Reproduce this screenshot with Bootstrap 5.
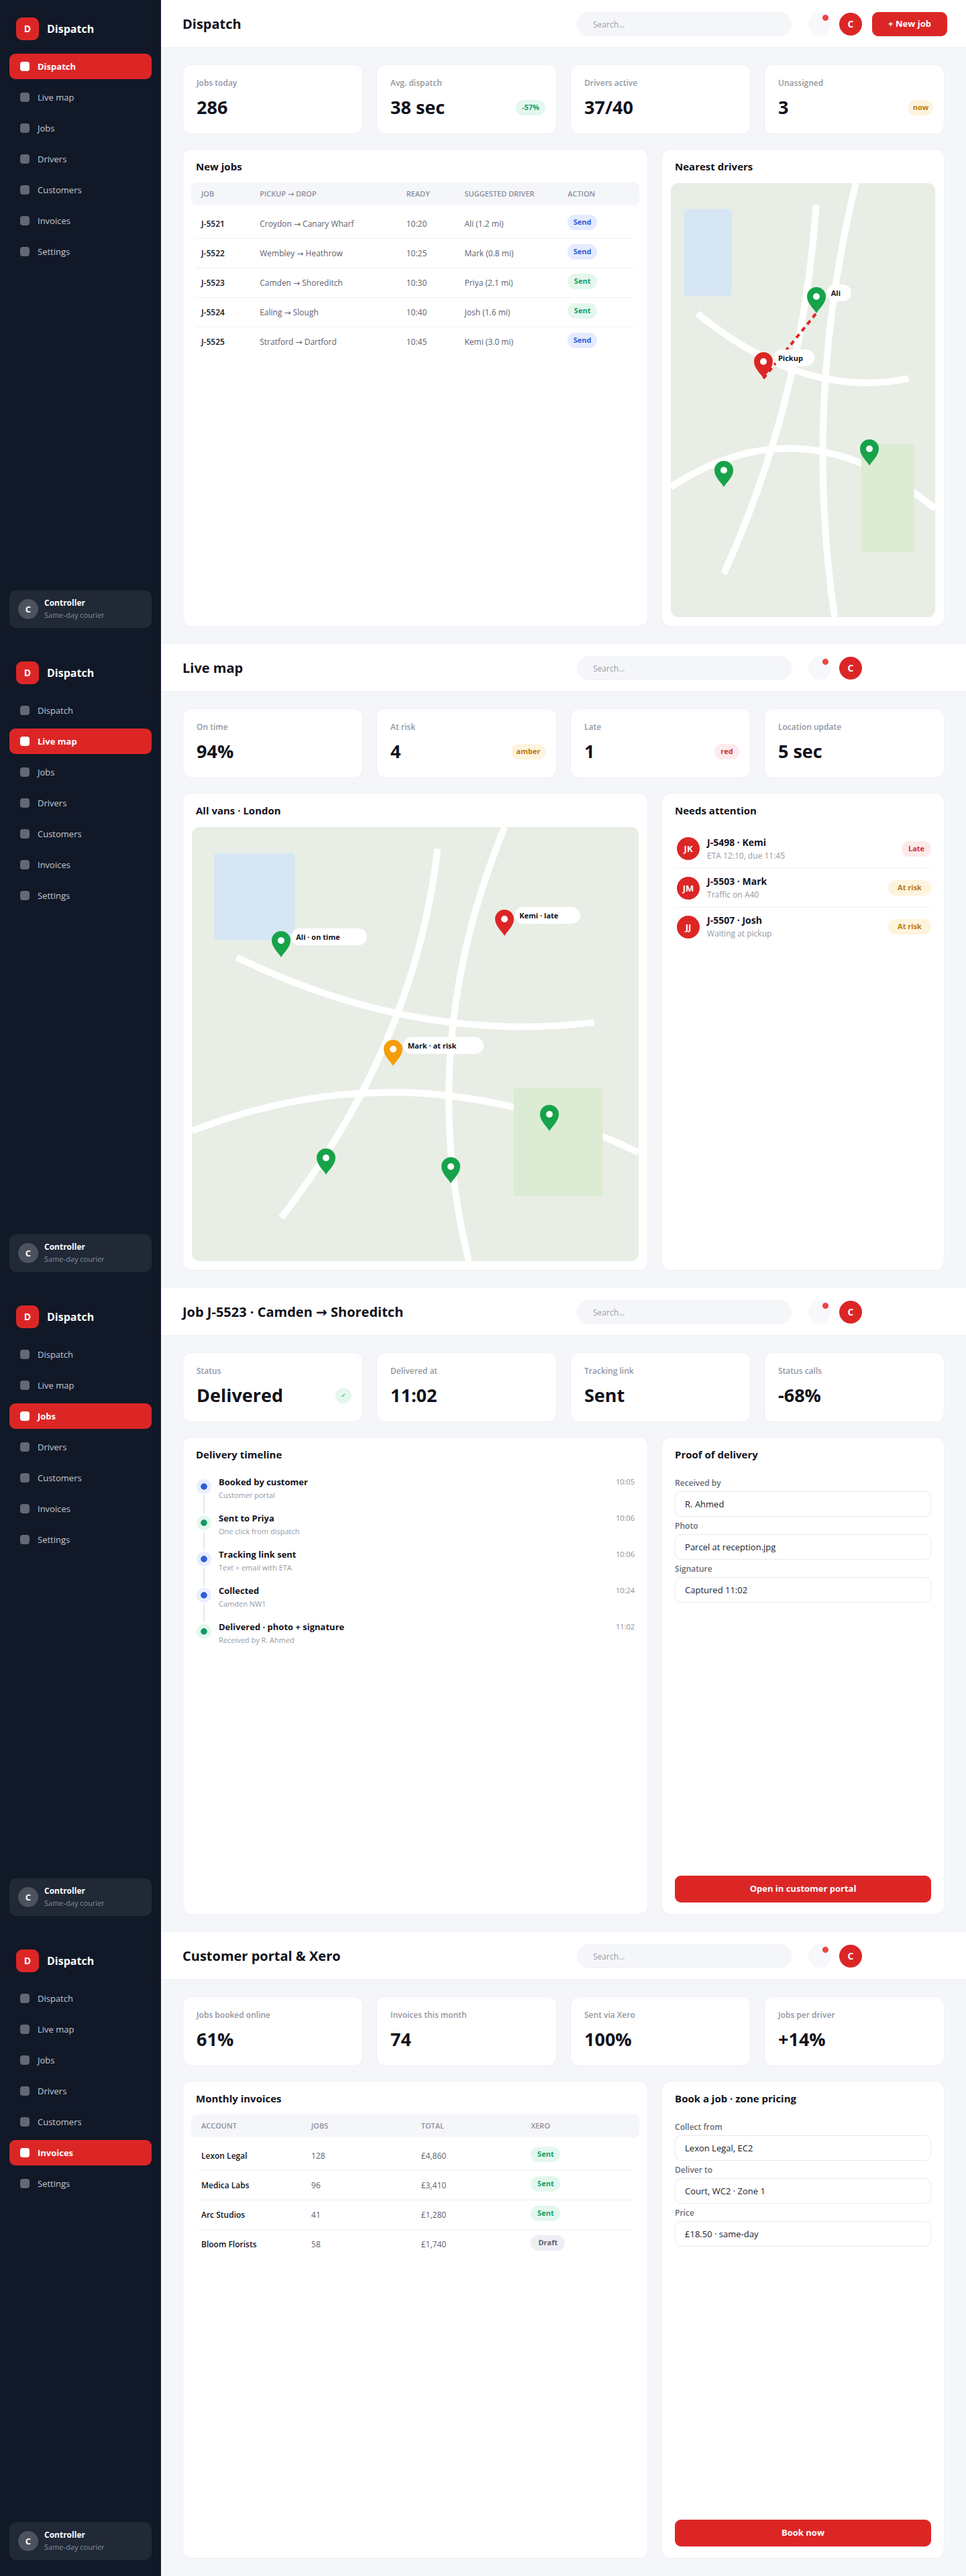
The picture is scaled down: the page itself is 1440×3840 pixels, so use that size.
<!DOCTYPE html>
<html lang="en">
<head>
<meta charset="utf-8">
<meta name="viewport" content="width=device-width, initial-scale=1">
<title>Dispatch</title>
<link href="https://cdn.jsdelivr.net/npm/bootstrap@5.3.0/dist/css/bootstrap.min.css" rel="stylesheet">
<style>
:root{--brand:#dc2626;--ink:#12121c;--muted:#8c909d;--soft:#f5f6fa;--rule:#eff1f4}
body{font-family:"Open Sans","DejaVu Sans",sans-serif;font-size:13px;line-height:20px;color:var(--ink);background:var(--soft)}
h1,h2,p,ul,ol{margin:0}
.screen{min-height:960px}
/* sidebar */
.side{width:240px;background:#111827;padding:26px 14px 24px}
.brand{gap:12px;padding:0 10px;margin-bottom:20px;color:#fff;font-size:16px;font-weight:700;text-decoration:none}
.brand-tile{width:34px;height:34px;border-radius:9px;background:var(--brand);font-size:14px}
.side .nav{gap:8px}
.side .nav-link{height:38px;padding:0 16px;gap:12px;border-radius:9px;color:#c3c8d2;font-size:13px}
.side .nav-link::before{content:"";width:14px;height:14px;border-radius:4px;background:#626875}
.side .nav-link.active{background:var(--brand);color:#fff;font-weight:700}
.side .nav-link.active::before{background:#fff}
.user{height:56px;padding:0 13px;gap:9px;border-radius:10px;background:#212836;line-height:18px}
.user-pic{width:30px;height:30px;border-radius:50%;background:#4c525e;color:#fff;font-size:13px;font-weight:700}
.user-name{font-size:12px;font-weight:700;color:#fff}
.user-org{font-size:11px;color:#868b96}
/* top bar */
.topbar{height:71px;padding:2px 28px 0 32px;background:#fff;border-bottom:1px solid #eff1f5}
.topbar h1{font-size:20px;font-weight:700;line-height:28px}
.search{width:320px;height:36px;padding:0 24px;border:0;border-radius:18px;background:var(--soft);font-size:12px}
.search::placeholder{color:#9a9eaa;opacity:1}
.bell{width:34px;height:34px;border:0;padding:0;border-radius:50%;background:#f7f8fb;margin-left:25px}
.bell::after{content:"";position:absolute;top:3px;right:4px;width:9px;height:9px;border-radius:50%;background:#ef4444}
.face{width:34px;height:34px;border-radius:50%;background:var(--brand);color:#fff;font-weight:700}
.topbar .face{margin-left:12px;font-size:14px}
.action-slot{width:112px;margin-left:15px}
.btn-brand{--bs-btn-bg:#dc2626;--bs-btn-color:#fff;--bs-btn-border-color:#dc2626;--bs-btn-hover-bg:#b91c1c;--bs-btn-hover-color:#fff;--bs-btn-padding-y:0;--bs-btn-font-size:13px;--bs-btn-font-weight:700;--bs-btn-border-radius:9px;height:36px}
.btn-tall{height:40px}
/* body */
.body{padding:25px 32px 26px;gap:22px}
.row.kpis{margin:0 -10px}
.row.kpis>.col{margin:0;padding:0 10px}
.tile{background:#fff;border:1px solid #eef0f4;border-radius:13px}
.kpi{height:104px;padding:18px 16px 0 20px}
.kpi-label{font-size:12px;font-weight:600;line-height:18px;color:#9397a3}
.kpi-value{font-size:27px;font-weight:700;line-height:36px;margin-top:9px}
.panels{display:grid;grid-template-columns:1.645fr 1fr;gap:20px}
.panel{padding:14px 19px 17px}
.panel h2{font-size:15px;font-weight:700;line-height:22px}
.panel-map{padding:14px 13px 13px}
.panel-map h2{padding:0 6px;margin-bottom:14px}
.panel-table{padding:14px 12px}
.panel-table h2{padding:0 7px;margin-bottom:13px}
/* status pills */
.chip{display:inline-block;height:23px;border-radius:12px;text-align:center;font-size:11px;font-weight:700;line-height:21px}
.chip-1{width:24px}.chip-3{width:37px}.chip-4{width:44px}.chip-5{width:51px}.chip-7{width:64px}
.chip-green{background:#e4f7ee;color:#15a06a}
.chip-blue{background:#e4ebfe;color:#3160d8}
.chip-amber{background:#fef3dc;color:#b97a10}
.chip-red{background:#fdeaeb;color:#cf343c}
.chip-gray{background:#eeeff4;color:#5f6472}
.chip-1{font-size:9px;font-weight:400}
/* tables */
.grid-table{table-layout:fixed;margin:0;--bs-table-bg:transparent}
.grid-table th{height:34px;padding:0;border:0;vertical-align:middle;background:var(--soft);font-size:11px;font-weight:600;color:var(--muted)}
.grid-table th:first-child{border-radius:8px 0 0 8px}
.grid-table th:last-child{border-radius:0 8px 8px 0}
.grid-table tr>:first-child{padding-left:15px}
.grid-table td{height:44px;padding:0;border:0;vertical-align:middle;font-size:12px;color:#5d6270}
.grid-table td:first-child{font-weight:600;color:var(--ink)}
.grid-table td .chip{display:block;margin-bottom:6px}
.grid-table tbody tr:not(:last-child){background:linear-gradient(var(--rule),var(--rule)) 7px 100%/calc(100% - 14px) 1px no-repeat}
.grid-table tbody::before{content:"";display:block;height:6px}
.jobs th:nth-child(1){width:15.3%}.jobs th:nth-child(2){width:32.7%}.jobs th:nth-child(3){width:13%}.jobs th:nth-child(4){width:23%}
.bills th:nth-child(1){width:26.8%}.bills th:nth-child(2),.bills th:nth-child(3){width:24.5%}
/* maps */
.map{border-radius:11px;background:#e8eee5}
.map-base{position:absolute;inset:0;width:100%;height:100%}
.road{fill:none;stroke:#fff;stroke-width:10px;vector-effect:non-scaling-stroke}
.route{stroke:#dc2626;stroke-width:4px;stroke-dasharray:7 6;vector-effect:non-scaling-stroke}
.pin{position:absolute;width:28px;height:39px;margin:-39px 0 0 -14px}
.pin svg{display:block}
.pin-tag{position:absolute;left:29px;top:-4px;height:25px;padding-left:7px;border-radius:13px;background:#fff;color:var(--ink);font-size:11px;font-weight:700;line-height:25px;white-space:nowrap}
.tag-3{width:37px}.tag-6{width:61px}.tag-11{width:98px}.tag-13{width:113px}.tag-14{width:120px}
/* attention list */
.alerts{margin-top:17px}
.alerts li{height:58px;padding-left:3px;gap:11px}
.alerts li+li{border-top:1px solid var(--rule)}
.alerts .face{font-size:13px}
.item-title{font-size:13px;font-weight:700;line-height:20px}
.alerts .item-title{font-size:14px}
.item-sub{font-size:12px;line-height:19px;color:#9599a4}
/* timeline */
.steps{margin-top:20px}
.steps li{height:54px;gap:11px}
.step-dot{width:22px;height:22px;margin:6px 0 0 1px;border:6px solid #e9eefd;border-radius:50%;background:#2f5fd9;background-clip:padding-box}
.step-dot.done{border-color:#e4f7ee;background-color:#159a66}
.steps li:not(:last-child) .step-dot::after{content:"";position:absolute;left:4px;top:18px;width:2px;height:28px;background:#e7e8ec}
.step-time{font-size:11px;line-height:20px;color:#8c909d}
.steps .item-sub{font-size:11px}
/* forms */
.fields{margin-top:23px}
.fields .form-label{display:block;margin:0 0 3px;font-size:12px;font-weight:600;line-height:18px;color:#686d7a}
.fields .form-control{height:38px;padding:0 14px;margin-bottom:5px;border:1px solid #e7e9ee;border-radius:9px;font-size:13px;color:#20222e}
</style>
<script src="https://cdn.jsdelivr.net/npm/bootstrap@5.3.0/dist/js/bootstrap.bundle.min.js"></script>
</head>
<body>
<svg width="0" height="0" class="position-absolute" aria-hidden="true">
  <symbol id="pin" viewBox="0 0 28 39"><path d="M14 39C10 32 0 24 0 14a14 14 0 0 1 28 0c0 10-10 18-14 25z" fill="currentColor"/><circle cx="14" cy="14" r="5" fill="#fff"/></symbol>
</svg>

<section class="screen d-flex">
  <aside class="side d-flex flex-column flex-shrink-0">
    <a class="brand d-flex align-items-center" href="#"><span class="brand-tile d-flex align-items-center justify-content-center">D</span>Dispatch</a>
    <nav class="nav flex-column">
      <a class="nav-link d-flex align-items-center active" href="#">Dispatch</a>
      <a class="nav-link d-flex align-items-center" href="#">Live map</a>
      <a class="nav-link d-flex align-items-center" href="#">Jobs</a>
      <a class="nav-link d-flex align-items-center" href="#">Drivers</a>
      <a class="nav-link d-flex align-items-center" href="#">Customers</a>
      <a class="nav-link d-flex align-items-center" href="#">Invoices</a>
      <a class="nav-link d-flex align-items-center" href="#">Settings</a>
    </nav>
    <div class="user d-flex align-items-center mt-auto"><span class="user-pic d-flex align-items-center justify-content-center">C</span><div><div class="user-name">Controller</div><div class="user-org">Same-day courier</div></div></div>
  </aside>
  <main class="flex-grow-1 d-flex flex-column">
    <header class="topbar d-flex align-items-center">
      <h1>Dispatch</h1>
      <input class="search ms-auto" type="search" placeholder="Search..." aria-label="Search">
      <button class="bell position-relative" type="button" aria-label="Notifications"></button>
      <span class="face d-flex align-items-center justify-content-center">C</span>
      <div class="action-slot"><button class="btn btn-brand w-100" type="button">+ New job</button></div>
    </header>
    <div class="body d-flex flex-column flex-grow-1">
      <div class="row row-cols-4 kpis">
        <div class="col"><div class="tile kpi"><div class="kpi-label">Jobs today</div><div class="kpi-value">286</div></div></div>
        <div class="col"><div class="tile kpi"><div class="kpi-label">Avg. dispatch</div><div class="kpi-value d-flex align-items-center justify-content-between">38 sec<span class="chip chip-4 chip-green">-57%</span></div></div></div>
        <div class="col"><div class="tile kpi"><div class="kpi-label">Drivers active</div><div class="kpi-value">37/40</div></div></div>
        <div class="col"><div class="tile kpi"><div class="kpi-label">Unassigned</div><div class="kpi-value d-flex align-items-center justify-content-between">3<span class="chip chip-3 chip-amber">now</span></div></div></div>
      </div>
      <div class="panels flex-grow-1">
        <div class="tile panel panel-table">
          <h2>New jobs</h2>
          <table class="table grid-table jobs">
            <thead><tr><th>JOB</th><th>PICKUP → DROP</th><th>READY</th><th>SUGGESTED DRIVER</th><th>ACTION</th></tr></thead>
            <tbody>
              <tr><td>J-5521</td><td>Croydon → Canary Wharf</td><td>10:20</td><td>Ali (1.2 mi)</td><td><span class="chip chip-4 chip-blue">Send</span></td></tr>
              <tr><td>J-5522</td><td>Wembley → Heathrow</td><td>10:25</td><td>Mark (0.8 mi)</td><td><span class="chip chip-4 chip-blue">Send</span></td></tr>
              <tr><td>J-5523</td><td>Camden → Shoreditch</td><td>10:30</td><td>Priya (2.1 mi)</td><td><span class="chip chip-4 chip-green">Sent</span></td></tr>
              <tr><td>J-5524</td><td>Ealing → Slough</td><td>10:40</td><td>Josh (1.6 mi)</td><td><span class="chip chip-4 chip-green">Sent</span></td></tr>
              <tr><td>J-5525</td><td>Stratford → Dartford</td><td>10:45</td><td>Kemi (3.0 mi)</td><td><span class="chip chip-4 chip-blue">Send</span></td></tr>
            </tbody>
          </table>
        </div>
        <div class="tile panel panel-map d-flex flex-column">
          <h2>Nearest drivers</h2>
          <div class="map position-relative overflow-hidden flex-grow-1">
            <svg class="map-base" viewBox="0 0 100 100" preserveAspectRatio="none" aria-hidden="true">
              <rect x="5" y="6" width="18" height="20" rx=".6" fill="#d6e6f4"/>
              <path class="road" d="M0 70Q50 50 100 75"/><path class="road" d="M10 30Q50 50 90 45"/><path class="road" d="M55 5Q50 50 20 90"/><path class="road" d="M70 0Q50 50 62 100"/>
              <rect x="72" y="60" width="20" height="25" rx=".6" fill="#dcebd3"/>
            </svg>
            <div class="pin" style="left:35%;top:45%;color:#dc2626"><svg width="28" height="39"><use href="#pin"/></svg></div>
            <svg class="map-base" viewBox="0 0 100 100" preserveAspectRatio="none" aria-hidden="true"><line class="route" x1="35" y1="45" x2="55" y2="30"/></svg>
            <div class="pin" style="left:35%;top:45%"><span class="pin-tag tag-6">Pickup</span></div>
            <div class="pin" style="left:55%;top:30%;color:#16a34a"><svg width="28" height="39"><use href="#pin"/></svg><span class="pin-tag tag-3">Ali</span></div>
            <div class="pin" style="left:20%;top:70%;color:#16a34a"><svg width="28" height="39"><use href="#pin"/></svg></div>
            <div class="pin" style="left:75%;top:65%;color:#16a34a"><svg width="28" height="39"><use href="#pin"/></svg></div>
          </div>
        </div>
      </div>
    </div>
  </main>
</section>

<section class="screen d-flex">
  <aside class="side d-flex flex-column flex-shrink-0">
    <a class="brand d-flex align-items-center" href="#"><span class="brand-tile d-flex align-items-center justify-content-center">D</span>Dispatch</a>
    <nav class="nav flex-column">
      <a class="nav-link d-flex align-items-center" href="#">Dispatch</a>
      <a class="nav-link d-flex align-items-center active" href="#">Live map</a>
      <a class="nav-link d-flex align-items-center" href="#">Jobs</a>
      <a class="nav-link d-flex align-items-center" href="#">Drivers</a>
      <a class="nav-link d-flex align-items-center" href="#">Customers</a>
      <a class="nav-link d-flex align-items-center" href="#">Invoices</a>
      <a class="nav-link d-flex align-items-center" href="#">Settings</a>
    </nav>
    <div class="user d-flex align-items-center mt-auto"><span class="user-pic d-flex align-items-center justify-content-center">C</span><div><div class="user-name">Controller</div><div class="user-org">Same-day courier</div></div></div>
  </aside>
  <main class="flex-grow-1 d-flex flex-column">
    <header class="topbar d-flex align-items-center">
      <h1>Live map</h1>
      <input class="search ms-auto" type="search" placeholder="Search..." aria-label="Search">
      <button class="bell position-relative" type="button" aria-label="Notifications"></button>
      <span class="face d-flex align-items-center justify-content-center">C</span>
      <div class="action-slot"></div>
    </header>
    <div class="body d-flex flex-column flex-grow-1">
      <div class="row row-cols-4 kpis">
        <div class="col"><div class="tile kpi"><div class="kpi-label">On time</div><div class="kpi-value">94%</div></div></div>
        <div class="col"><div class="tile kpi"><div class="kpi-label">At risk</div><div class="kpi-value d-flex align-items-center justify-content-between">4<span class="chip chip-5 chip-amber">amber</span></div></div></div>
        <div class="col"><div class="tile kpi"><div class="kpi-label">Late</div><div class="kpi-value d-flex align-items-center justify-content-between">1<span class="chip chip-3 chip-red">red</span></div></div></div>
        <div class="col"><div class="tile kpi"><div class="kpi-label">Location update</div><div class="kpi-value">5 sec</div></div></div>
      </div>
      <div class="panels flex-grow-1">
        <div class="tile panel panel-map d-flex flex-column">
          <h2>All vans · London</h2>
          <div class="map position-relative overflow-hidden flex-grow-1">
            <svg class="map-base" viewBox="0 0 100 100" preserveAspectRatio="none" aria-hidden="true">
              <rect x="5" y="6" width="18" height="20" rx=".6" fill="#d6e6f4"/>
              <path class="road" d="M0 70Q50 50 100 75"/><path class="road" d="M10 30Q50 50 90 45"/><path class="road" d="M55 5Q50 50 20 90"/><path class="road" d="M70 0Q50 50 62 100"/>
              <rect x="72" y="60" width="20" height="25" rx=".6" fill="#dcebd3"/>
            </svg>
            <div class="pin" style="left:20%;top:30%;color:#16a34a"><svg width="28" height="39"><use href="#pin"/></svg><span class="pin-tag tag-13">Ali · on time</span></div>
            <div class="pin" style="left:70%;top:25%;color:#dc2626"><svg width="28" height="39"><use href="#pin"/></svg><span class="pin-tag tag-11">Kemi · late</span></div>
            <div class="pin" style="left:45%;top:55%;color:#f59e0b"><svg width="28" height="39"><use href="#pin"/></svg><span class="pin-tag tag-14">Mark · at risk</span></div>
            <div class="pin" style="left:30%;top:80%;color:#16a34a"><svg width="28" height="39"><use href="#pin"/></svg></div>
            <div class="pin" style="left:58%;top:82%;color:#16a34a"><svg width="28" height="39"><use href="#pin"/></svg></div>
            <div class="pin" style="left:80%;top:70%;color:#16a34a"><svg width="28" height="39"><use href="#pin"/></svg></div>
          </div>
        </div>
        <div class="tile panel">
          <h2>Needs attention</h2>
          <ul class="alerts list-unstyled">
            <li class="d-flex align-items-center"><span class="face d-flex align-items-center justify-content-center">JK</span><div class="flex-grow-1"><div class="item-title">J-5498 · Kemi</div><div class="item-sub">ETA 12:10, due 11:45</div></div><span class="chip chip-4 chip-red">Late</span></li>
            <li class="d-flex align-items-center"><span class="face d-flex align-items-center justify-content-center">JM</span><div class="flex-grow-1"><div class="item-title">J-5503 · Mark</div><div class="item-sub">Traffic on A40</div></div><span class="chip chip-7 chip-amber">At risk</span></li>
            <li class="d-flex align-items-center"><span class="face d-flex align-items-center justify-content-center">JJ</span><div class="flex-grow-1"><div class="item-title">J-5507 · Josh</div><div class="item-sub">Waiting at pickup</div></div><span class="chip chip-7 chip-amber">At risk</span></li>
          </ul>
        </div>
      </div>
    </div>
  </main>
</section>

<section class="screen d-flex">
  <aside class="side d-flex flex-column flex-shrink-0">
    <a class="brand d-flex align-items-center" href="#"><span class="brand-tile d-flex align-items-center justify-content-center">D</span>Dispatch</a>
    <nav class="nav flex-column">
      <a class="nav-link d-flex align-items-center" href="#">Dispatch</a>
      <a class="nav-link d-flex align-items-center" href="#">Live map</a>
      <a class="nav-link d-flex align-items-center active" href="#">Jobs</a>
      <a class="nav-link d-flex align-items-center" href="#">Drivers</a>
      <a class="nav-link d-flex align-items-center" href="#">Customers</a>
      <a class="nav-link d-flex align-items-center" href="#">Invoices</a>
      <a class="nav-link d-flex align-items-center" href="#">Settings</a>
    </nav>
    <div class="user d-flex align-items-center mt-auto"><span class="user-pic d-flex align-items-center justify-content-center">C</span><div><div class="user-name">Controller</div><div class="user-org">Same-day courier</div></div></div>
  </aside>
  <main class="flex-grow-1 d-flex flex-column">
    <header class="topbar d-flex align-items-center">
      <h1>Job J-5523 · Camden → Shoreditch</h1>
      <input class="search ms-auto" type="search" placeholder="Search..." aria-label="Search">
      <button class="bell position-relative" type="button" aria-label="Notifications"></button>
      <span class="face d-flex align-items-center justify-content-center">C</span>
      <div class="action-slot"></div>
    </header>
    <div class="body d-flex flex-column flex-grow-1">
      <div class="row row-cols-4 kpis">
        <div class="col"><div class="tile kpi"><div class="kpi-label">Status</div><div class="kpi-value d-flex align-items-center justify-content-between">Delivered<span class="chip chip-1 chip-green">✓</span></div></div></div>
        <div class="col"><div class="tile kpi"><div class="kpi-label">Delivered at</div><div class="kpi-value">11:02</div></div></div>
        <div class="col"><div class="tile kpi"><div class="kpi-label">Tracking link</div><div class="kpi-value">Sent</div></div></div>
        <div class="col"><div class="tile kpi"><div class="kpi-label">Status calls</div><div class="kpi-value">-68%</div></div></div>
      </div>
      <div class="panels flex-grow-1">
        <div class="tile panel">
          <h2>Delivery timeline</h2>
          <ol class="steps list-unstyled">
            <li class="d-flex align-items-start"><span class="step-dot position-relative flex-shrink-0"></span><div class="flex-grow-1"><div class="item-title">Booked by customer</div><div class="item-sub">Customer portal</div></div><time class="step-time">10:05</time></li>
            <li class="d-flex align-items-start"><span class="step-dot done position-relative flex-shrink-0"></span><div class="flex-grow-1"><div class="item-title">Sent to Priya</div><div class="item-sub">One click from dispatch</div></div><time class="step-time">10:06</time></li>
            <li class="d-flex align-items-start"><span class="step-dot position-relative flex-shrink-0"></span><div class="flex-grow-1"><div class="item-title">Tracking link sent</div><div class="item-sub">Text + email with ETA</div></div><time class="step-time">10:06</time></li>
            <li class="d-flex align-items-start"><span class="step-dot position-relative flex-shrink-0"></span><div class="flex-grow-1"><div class="item-title">Collected</div><div class="item-sub">Camden NW1</div></div><time class="step-time">10:24</time></li>
            <li class="d-flex align-items-start"><span class="step-dot done position-relative flex-shrink-0"></span><div class="flex-grow-1"><div class="item-title">Delivered · photo + signature</div><div class="item-sub">Received by R. Ahmed</div></div><time class="step-time">11:02</time></li>
          </ol>
        </div>
        <form class="tile panel d-flex flex-column">
          <h2>Proof of delivery</h2>
          <div class="fields">
            <label class="form-label" for="received">Received by</label><input class="form-control" id="received" value="R. Ahmed">
            <label class="form-label" for="photo">Photo</label><input class="form-control" id="photo" value="Parcel at reception.jpg">
            <label class="form-label" for="signature">Signature</label><input class="form-control" id="signature" value="Captured 11:02">
          </div>
          <button class="btn btn-brand btn-tall w-100 mt-auto" type="button">Open in customer portal</button>
        </form>
      </div>
    </div>
  </main>
</section>

<section class="screen d-flex">
  <aside class="side d-flex flex-column flex-shrink-0">
    <a class="brand d-flex align-items-center" href="#"><span class="brand-tile d-flex align-items-center justify-content-center">D</span>Dispatch</a>
    <nav class="nav flex-column">
      <a class="nav-link d-flex align-items-center" href="#">Dispatch</a>
      <a class="nav-link d-flex align-items-center" href="#">Live map</a>
      <a class="nav-link d-flex align-items-center" href="#">Jobs</a>
      <a class="nav-link d-flex align-items-center" href="#">Drivers</a>
      <a class="nav-link d-flex align-items-center" href="#">Customers</a>
      <a class="nav-link d-flex align-items-center active" href="#">Invoices</a>
      <a class="nav-link d-flex align-items-center" href="#">Settings</a>
    </nav>
    <div class="user d-flex align-items-center mt-auto"><span class="user-pic d-flex align-items-center justify-content-center">C</span><div><div class="user-name">Controller</div><div class="user-org">Same-day courier</div></div></div>
  </aside>
  <main class="flex-grow-1 d-flex flex-column">
    <header class="topbar d-flex align-items-center">
      <h1>Customer portal &amp; Xero</h1>
      <input class="search ms-auto" type="search" placeholder="Search..." aria-label="Search">
      <button class="bell position-relative" type="button" aria-label="Notifications"></button>
      <span class="face d-flex align-items-center justify-content-center">C</span>
      <div class="action-slot"></div>
    </header>
    <div class="body d-flex flex-column flex-grow-1">
      <div class="row row-cols-4 kpis">
        <div class="col"><div class="tile kpi"><div class="kpi-label">Jobs booked online</div><div class="kpi-value">61%</div></div></div>
        <div class="col"><div class="tile kpi"><div class="kpi-label">Invoices this month</div><div class="kpi-value">74</div></div></div>
        <div class="col"><div class="tile kpi"><div class="kpi-label">Sent via Xero</div><div class="kpi-value">100%</div></div></div>
        <div class="col"><div class="tile kpi"><div class="kpi-label">Jobs per driver</div><div class="kpi-value">+14%</div></div></div>
      </div>
      <div class="panels flex-grow-1">
        <div class="tile panel panel-table">
          <h2>Monthly invoices</h2>
          <table class="table grid-table bills">
            <thead><tr><th>ACCOUNT</th><th>JOBS</th><th>TOTAL</th><th>XERO</th></tr></thead>
            <tbody>
              <tr><td>Lexon Legal</td><td>128</td><td>£4,860</td><td><span class="chip chip-4 chip-green">Sent</span></td></tr>
              <tr><td>Medica Labs</td><td>96</td><td>£3,410</td><td><span class="chip chip-4 chip-green">Sent</span></td></tr>
              <tr><td>Arc Studios</td><td>41</td><td>£1,280</td><td><span class="chip chip-4 chip-green">Sent</span></td></tr>
              <tr><td>Bloom Florists</td><td>58</td><td>£1,740</td><td><span class="chip chip-5 chip-gray">Draft</span></td></tr>
            </tbody>
          </table>
        </div>
        <form class="tile panel d-flex flex-column">
          <h2>Book a job · zone pricing</h2>
          <div class="fields">
            <label class="form-label" for="collect">Collect from</label><input class="form-control" id="collect" value="Lexon Legal, EC2">
            <label class="form-label" for="deliver">Deliver to</label><input class="form-control" id="deliver" value="Court, WC2 · Zone 1">
            <label class="form-label" for="price">Price</label><input class="form-control" id="price" value="£18.50 · same-day">
          </div>
          <button class="btn btn-brand btn-tall w-100 mt-auto" type="button">Book now</button>
        </form>
      </div>
    </div>
  </main>
</section>
</body>
</html>
